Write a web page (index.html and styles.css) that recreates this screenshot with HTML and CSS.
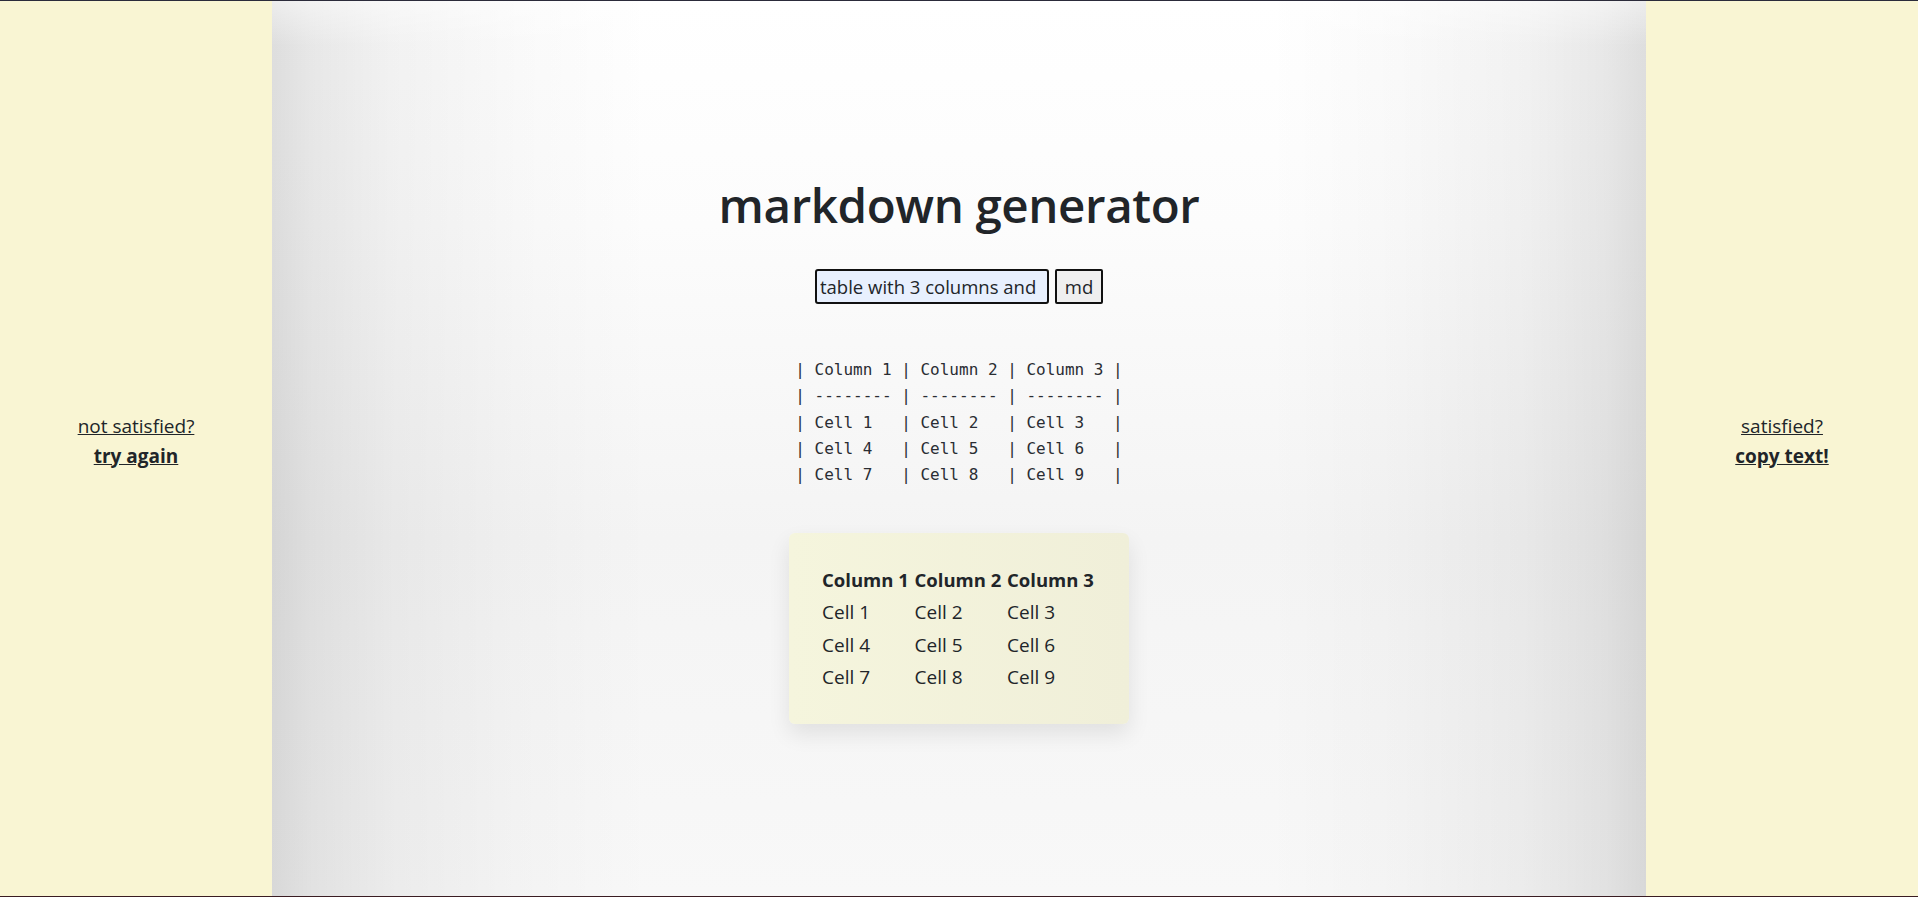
FILE: index.html
```html
<!DOCTYPE html>
<html lang="en">
<head>
<meta charset="utf-8">
<title>markdown generator</title>
<link rel="stylesheet" href="styles.css">
</head>
<body>
<div class="page">
  <aside class="side">
    <a class="side-ask" href="#">not satisfied?</a>
    <a class="side-act" href="#">try again</a>
  </aside>
  <main class="main">
    <h1 class="title">markdown generator</h1>
    <form class="prompt">
      <input class="prompt-input" type="text" value="table with 3 columns and 3 rows">
      <button class="prompt-btn" type="button">md</button>
    </form>
<pre class="md-source">| Column 1 | Column 2 | Column 3 |
| -------- | -------- | -------- |
| Cell 1   | Cell 2   | Cell 3   |
| Cell 4   | Cell 5   | Cell 6   |
| Cell 7   | Cell 8   | Cell 9   |</pre>
    <div class="preview">
      <table class="preview-table">
        <thead>
          <tr><th>Column 1</th><th>Column 2</th><th>Column 3</th></tr>
        </thead>
        <tbody>
          <tr><td>Cell 1</td><td>Cell 2</td><td>Cell 3</td></tr>
          <tr><td>Cell 4</td><td>Cell 5</td><td>Cell 6</td></tr>
          <tr><td>Cell 7</td><td>Cell 8</td><td>Cell 9</td></tr>
        </tbody>
      </table>
    </div>
  </main>
  <aside class="side">
    <a class="side-ask" href="#">satisfied?</a>
    <a class="side-act" href="#">copy text!</a>
  </aside>
</div>
</body>
</html>
```
FILE: styles.css
```css
* { box-sizing: border-box; }

html, body {
  margin: 0;
  padding: 0;
}

body {
  font-family: "Open Sans", "Noto Sans", sans-serif;
  font-size: 18.5px;
  color: #212529;
  background: #fff;
}

.page {
  display: grid;
  grid-template-columns: 272px 1fr 272px;
  height: 897px;
  border-top: 1px solid #2b2b3a;
  border-bottom: 1px solid #3a1c22;
  overflow: hidden;
}

.side {
  background: #f9f5d3;
  display: flex;
  flex-direction: column;
  align-items: center;
  justify-content: center;
  padding-bottom: 16px;
  font-size: 19px;
}

.side-ask,
.side-act {
  color: #212529;
  text-decoration: underline;
  line-height: 30px;
}

.side-act {
  font-weight: 700;
}

.main {
  display: flex;
  flex-direction: column;
  align-items: center;
  padding-top: 175px;
  background-image:
    linear-gradient(180deg, rgba(255,255,255,0.45) 0, rgba(255,255,255,0) 45px),
    linear-gradient(90deg,
      rgba(0,0,0,0.13) 0,
      rgba(0,0,0,0.09) 40px,
      rgba(0,0,0,0.05) 120px,
      rgba(0,0,0,0.02) 250px,
      rgba(0,0,0,0) 380px,
      rgba(0,0,0,0) calc(100% - 380px),
      rgba(0,0,0,0.02) calc(100% - 250px),
      rgba(0,0,0,0.05) calc(100% - 120px),
      rgba(0,0,0,0.09) calc(100% - 40px),
      rgba(0,0,0,0.13) 100%),
    linear-gradient(180deg, #ffffff 0, #fcfcfc 25%, #f4f4f4 60%, #f8f8f8 100%);
}

.title {
  margin: 0;
  font-size: 47.5px;
  font-weight: 600;
  line-height: 1.2;
  letter-spacing: -0.4px;
}

.prompt {
  display: flex;
  gap: 6px;
  margin-top: 36px;
}

.prompt-input,
.prompt-btn {
  height: 35px;
  border: 2px solid #111;
  font-family: inherit;
  font-size: 18.5px;
  color: #212529;
}

.prompt-input {
  width: 234px;
  padding: 0 9px 0 3px;
  border-radius: 3px;
  background: #e8f0fe;
}

.prompt-btn {
  width: 48px;
  padding: 0;
  border-radius: 2px;
  background: #efefef;
}

.md-source {
  margin: 53px 0 0;
  font-family: "DejaVu Sans Mono", "Liberation Mono", monospace;
  font-size: 16px;
  line-height: 26.25px;
  color: #2a2d33;
}

.preview {
  margin-top: 45px;
  padding: 30px 34px 31px 33px;
  background: linear-gradient(90deg, #f5f5dd, #f0efd9);
  border-radius: 6px;
  box-shadow: 0 10px 22px rgba(0, 0, 0, 0.09);
}

.preview-table {
  border-collapse: collapse;
  white-space: nowrap;
  font-size: 19px;
}

.preview-table th,
.preview-table td {
  padding: 0;
  height: 32.5px;
  text-align: left;
  vertical-align: middle;
}

.preview-table th {
  font-weight: 700;
  font-size: 18.5px;
}

.preview-table th:nth-child(1),
.preview-table th:nth-child(2) {
  width: 92.5px;
}

.preview-table th:nth-child(3) {
  width: 88px;
}
```
